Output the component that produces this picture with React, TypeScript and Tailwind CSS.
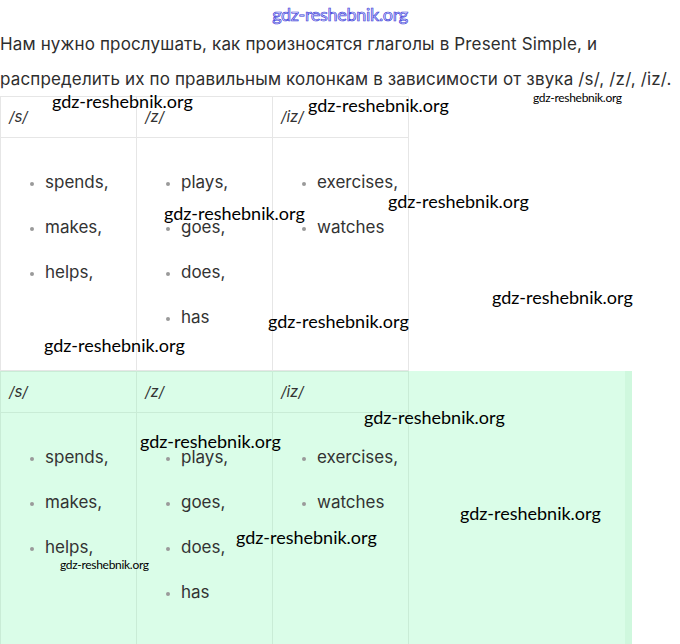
import React from "react";

const columns = [
  { head: "/s/", words: ["spends,", "makes,", "helps,"] },
  { head: "/z/", words: ["plays,", "goes,", "does,", "has"] },
  { head: "/iz/", words: ["exercises,", "watches"] },
];

// watermark overlays: [left, top, small]
const marks: [number, number, boolean][] = [
  [52, 88, false],
  [308, 92, false],
  [533, 87, true],
  [388, 188, false],
  [164, 200, false],
  [492, 284, false],
  [268, 308, false],
  [44, 332, false],
  [364, 404, false],
  [140, 428, false],
  [460, 500, false],
  [236, 524, false],
  [60, 554, true],
];

const WordTable = ({ green }: { green?: boolean }) => {
  const border = green ? "border-[#c9ecd6]" : "border-[#e6e6e6]";
  return (
    <table className={`border-collapse table-fixed w-[409px] ${border}`}>
      <tbody>
        <tr className="h-[41px]">
          {columns.map((col) => (
            <td
              key={col.head}
              className={`w-[136px] border ${border} px-2 align-middle italic text-[15px] text-[#333] [font-style:oblique_12deg]`}
            >
              {col.head}
            </td>
          ))}
        </tr>
        <tr className="h-[233px]">
          {columns.map((col) => (
            <td
              key={col.head}
              className={`border ${border} align-top pt-[31px] pl-[8px]`}
            >
              <ul className="list-disc pl-[36px] marker:text-[#9a9a9a] marker:text-[12px]">
                {col.words.map((w) => (
                  <li
                    key={w}
                    className="text-[17px] leading-[27px] mb-[18px] text-[#333]"
                  >
                    {w}
                  </li>
                ))}
              </ul>
            </td>
          ))}
        </tr>
      </tbody>
    </table>
  );
};

export default function App() {
  return (
    <div
      className="relative w-[680px] h-[644px] overflow-hidden bg-white"
      style={{ fontFamily: "Inter, 'Noto Sans', sans-serif" }}
    >
      <div className="pt-[27px]">
        <p className="text-[17px] leading-[35px] text-[#2e2e2e] tracking-[0.15px] whitespace-nowrap">
          Нам нужно прослушать, как произносятся глаголы в Present Simple, и
          <br />
          распределить их по правильным колонкам в зависимости от звука /s/,
          /z/, /iz/.
        </p>
        <div className="mt-[-1px]">
          <WordTable />
        </div>
        <div className="w-[632px] bg-[#dafde8] border-r-[7px] border-[#cff8de]">
          <WordTable green />
        </div>
      </div>

      {/* top blue watermark */}
      <div
        className="absolute left-[268px] top-[1px] w-[144px] text-center text-[18px] text-[#e4e4ff] [-webkit-text-stroke:0.7px_#3a3ad8] tracking-[-0.3px]"
        style={{ fontFamily: "Lato, sans-serif" }}
      >
        gdz-reshebnik.org
      </div>

      {marks.map(([x, y, small], i) => (
        <div
          key={i}
          className={`absolute whitespace-nowrap text-black ${
            small ? "text-[12px] tracking-[-0.3px]" : "text-[18px]"
          }`}
          style={{
            left: x,
            top: small ? y + 2 : y,
            fontFamily: "Lato, 'Liberation Sans', sans-serif",
          }}
        >
          gdz-reshebnik.org
        </div>
      ))}
    </div>
  );
}
